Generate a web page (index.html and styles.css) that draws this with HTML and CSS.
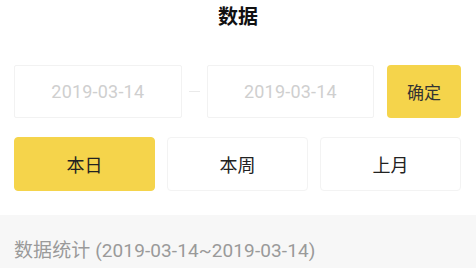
FILE: index.html
```html
<!DOCTYPE html>
<html lang="zh">
<head>
<meta charset="utf-8">
<link rel="stylesheet" href="styles.css">
</head>
<body>
<header class="title">数据</header>
<div class="range">
  <div class="date-input">2019-03-14</div>
  <div class="dash"></div>
  <div class="date-input">2019-03-14</div>
  <button class="confirm">确定</button>
</div>
<div class="periods">
  <button class="period active">本日</button>
  <button class="period">本周</button>
  <button class="period">上月</button>
</div>
<section class="stats">
  <div class="stats-title">数据统计 (2019-03-14~2019-03-14)</div>
</section>
</body>
</html>
```
FILE: styles.css
```css
html, body {
  margin: 0;
  padding: 0;
  background: #fff;
  font-family: Roboto, "Noto Sans CJK SC", "Noto Sans", sans-serif;
  color: #222;
}
.title {
  height: 34px;
  line-height: 34px;
  text-align: center;
  font-size: 20px;
  font-weight: 700;
  color: #111;
}
.range {
  display: flex;
  align-items: center;
  margin-top: 31px;
  padding: 0 15px 0 14px;
  height: 53px;
}
.date-input {
  width: 168px;
  height: 53px;
  box-sizing: border-box;
  border: 1px solid #f2f2f2;
  border-radius: 2px;
  display: flex;
  align-items: center;
  justify-content: center;
  font-size: 18px;
  color: #cfcfcf;
  letter-spacing: 0.2px;
}
.dash {
  width: 11px;
  height: 1px;
  background: #eaeaea;
  margin: 0 7px;
}
.confirm {
  margin-left: 13px;
  width: 74px;
  height: 53px;
  border: none;
  border-radius: 4px;
  background: #f5d44b;
  font-family: inherit;
  font-size: 17px;
  color: #333;
  padding: 0;
}
.periods {
  display: grid;
  grid-template-columns: repeat(3, 141px);
  column-gap: 12px;
  padding: 0 14px;
  margin-top: 19px;
}
.period {
  height: 54px;
  box-sizing: border-box;
  border: 1px solid #f3f3f3;
  border-radius: 4px;
  background: #fff;
  font-family: inherit;
  font-size: 18px;
  color: #222;
  padding: 0;
}
.period.active {
  background: #f5d44b;
  border-color: #f5d44b;
}
.stats {
  margin-top: 24px;
  background: #f7f7f7;
  height: 53px;
  padding: 0 14px;
  display: flex;
  align-items: center;
}
.stats-title {
  font-size: 19px;
  color: #9a9a9a;
  margin-top: 14px;
  letter-spacing: 0.1px;
}
```
